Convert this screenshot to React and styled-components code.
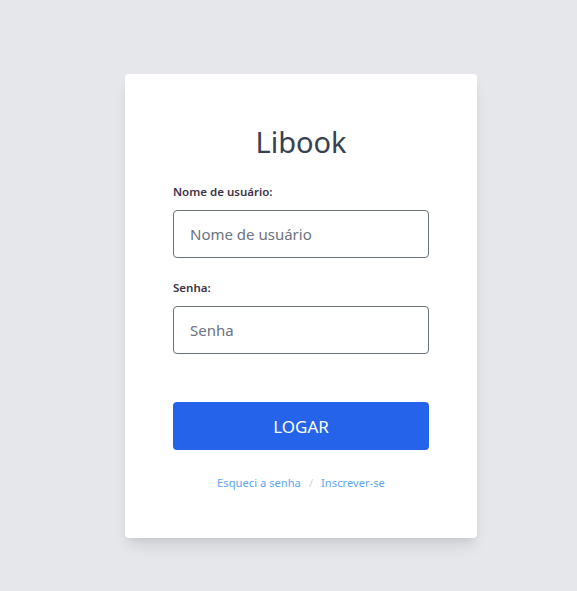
import React from 'react';
import styled, { createGlobalStyle } from 'styled-components';

const GlobalStyle = createGlobalStyle`
  html, body {
    margin: 0;
    padding: 0;
    background: #e5e7eb;
    font-family: "Noto Sans", "Open Sans", sans-serif;
  }
`;

function App() {
  return (
    <Page>
      <GlobalStyle />
      <Card>
        <Title>Libook</Title>
        <Field>
          <Label htmlFor="user">Nome de usuário:</Label>
          <Input id="user" type="text" placeholder="Nome de usuário" />
        </Field>
        <Field>
          <Label htmlFor="pass">Senha:</Label>
          <Input id="pass" type="password" placeholder="Senha" />
        </Field>
        <Button type="button">LOGAR</Button>
        <Links>
          <Link href="#">Esqueci a senha</Link>
          <Sep>/</Sep>
          <Link href="#">Inscrever-se</Link>
        </Links>
      </Card>
    </Page>
  );
}

const Page = styled.div`
  min-height: 591px;
  display: flex;
  align-items: flex-start;
  padding: 74px 0 0 125px;
  box-sizing: border-box;
`;

const Card = styled.div`
  width: 352px;
  box-sizing: border-box;
  padding: 48px 48px 47px;
  background: #fff;
  border-radius: 4px;
  box-shadow: 0 10px 15px -3px rgba(0, 0, 0, 0.1),
    0 4px 6px -2px rgba(0, 0, 0, 0.05);
  display: flex;
  flex-direction: column;
`;

const Title = styled.h1`
  margin: 0 0 22px;
  font-size: 29px;
  line-height: 40px;
  font-weight: 400;
  color: #374151;
  text-align: center;
`;

const Field = styled.div`
  display: flex;
  flex-direction: column;
  gap: 10px;
  margin-bottom: 22px;

  & + & {
    margin-bottom: 48px;
  }
`;

const Label = styled.label`
  font-size: 11.5px;
  line-height: 16px;
  font-weight: 600;
  color: #3f3346;
`;

const Input = styled.input`
  height: 48px;
  box-sizing: border-box;
  border: 1px solid #6b7280;
  border-radius: 4px;
  padding: 0 16px;
  font-family: inherit;
  font-size: 15px;
  color: #374151;
  outline: none;

  &::placeholder {
    color: #6b7280;
  }
`;

const Button = styled.button`
  height: 48px;
  border: none;
  border-radius: 4px;
  background: #2563eb;
  color: #fff;
  font-family: inherit;
  font-size: 17px;
  cursor: pointer;
`;

const Links = styled.div`
  margin-top: 25px;
  display: flex;
  justify-content: center;
  gap: 8px;
  font-size: 11.2px;
  line-height: 16px;
`;

const Link = styled.a`
  color: #60a5fa;
  text-decoration: none;
`;

const Sep = styled.span`
  color: #d1d5db;
`;

export default App;
